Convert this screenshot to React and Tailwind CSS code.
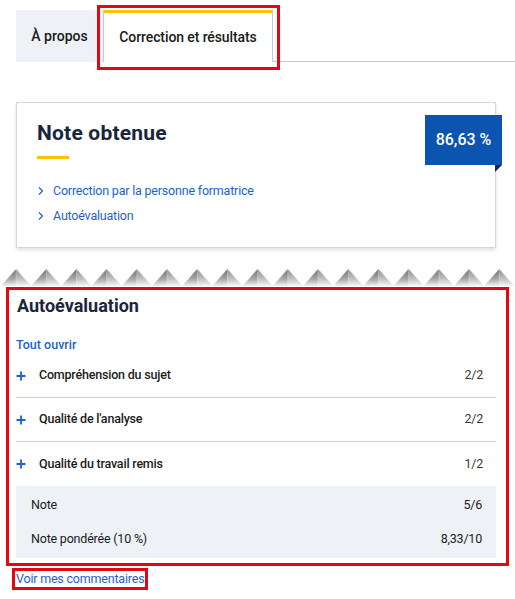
import React from "react";

const font = { fontFamily: "Roboto, 'Noto Sans', sans-serif" };

// torn-paper edge made of shaded pyramids
function Zigzag() {
  return (
    <svg width="515" height="17" className="block">
      <defs>
        <linearGradient id="fadeL" x1="0" y1="0" x2="0" y2="1">
          <stop offset="0" stopColor="#6e6e6e" />
          <stop offset="0.6" stopColor="#a9a9a9" />
          <stop offset="1" stopColor="#f2f2f2" />
        </linearGradient>
        <linearGradient id="fadeR" x1="0" y1="0" x2="0" y2="1">
          <stop offset="0" stopColor="#8c8c8c" />
          <stop offset="0.6" stopColor="#c4c4c4" />
          <stop offset="1" stopColor="#f6f6f6" />
        </linearGradient>
        <pattern id="teeth" x="1" y="0" width="30.2" height="17" patternUnits="userSpaceOnUse">
          <polygon points="0,17 15,0 15,17" fill="url(#fadeL)" />
          <polygon points="15,0 30.2,17 15,17" fill="url(#fadeR)" />
        </pattern>
      </defs>
      <rect x="0" y="0" width="515" height="17" fill="url(#teeth)" />
    </svg>
  );
}

function Chevron() {
  return (
    <svg width="8" height="10" viewBox="0 0 8 10" className="shrink-0">
      <path d="M2 1.5 L5.5 5 L2 8.5" fill="none" stroke="#1f5fcc" strokeWidth="1.2" />
    </svg>
  );
}

function Plus() {
  return (
    <svg width="10" height="10" viewBox="0 0 10 10" className="shrink-0">
      <path d="M5 0.5 V9.5 M0.5 5 H9.5" stroke="#1f5fcc" strokeWidth="1.8" />
    </svg>
  );
}

const criteres = [
  { label: "Compréhension du sujet", score: "2/2" },
  { label: "Qualité de l'analyse", score: "2/2" },
  { label: "Qualité du travail remis", score: "1/2" },
];

export default function App() {
  return (
    <div className="w-[515px] h-[599px] bg-white overflow-hidden text-[#1b1b1b]" style={font}>
      {/* Tabs */}
      <div className="flex pt-[10px] pl-[16px]">
        <div className="w-[87px] h-[52px] bg-[#eef1f5] flex items-center justify-center text-[14px] font-medium text-[#1a1a1a]">
          À propos
        </div>
        <div className="relative w-[170px] h-[52px] border-t-[3px] border-t-[#fcc200] border-x border-x-[#c5cbd4] flex items-center justify-center text-[14px] font-medium text-[#1a1a1a] tracking-[-0.1px]">
          Correction et résultats
          <div className="absolute left-[-7px] right-[-8px] top-[-8px] bottom-[-8px] border-[3px] border-[#e30613]"></div>
        </div>
        <div className="flex-1 h-[52px] border-b border-[#c5cbd4]"></div>
      </div>

      {/* Note card */}
      <div className="relative ml-[16px] w-[480px] mt-[40px] h-[146px] border border-[#d3d8df] shadow-[0_2px_4px_rgba(0,0,0,0.12)] pl-[20px] pt-[16px]">
        <h2 className="text-[21px] leading-[28px] font-bold text-[#18263d] tracking-[0.2px]">Note obtenue</h2>
        <div className="mt-[9px] w-[32px] h-[3px] bg-[#fcc200]"></div>
        <div className="mt-[24px] flex flex-col gap-[9px] text-[12.5px] tracking-[-0.2px] text-[#1f5fcc]">
          <div className="flex items-center gap-[8px] h-[16px]">
            <Chevron />
            <span>Correction par la personne formatrice</span>
          </div>
          <div className="flex items-center gap-[8px] h-[16px]">
            <Chevron />
            <span>Autoévaluation</span>
          </div>
        </div>
        <div className="absolute top-[12px] right-[-7px]">
          <div className="w-[77px] h-[50px] bg-[#0b55b1] text-white flex items-center justify-center text-[16px] font-medium">
            86,63 %
          </div>
          <svg width="7" height="7" className="block ml-auto">
            <polygon points="0,0 7,0 0,7" fill="#13294b" />
          </svg>
        </div>
      </div>

      {/* Torn edge */}
      <div className="mt-[21px]">
        <Zigzag />
      </div>

      {/* Autoévaluation */}
      <div className="relative pl-[16px] pt-[7px] mt-[1px]">
        <div className="absolute left-[6px] right-[6px] top-[0px] h-[279px] border-[3px] border-[#e30613]"></div>
        <div className="w-[480px]">
          <h3 className="text-[18px] leading-[24px] font-bold text-[#18263d] pl-[1px]">Autoévaluation</h3>
          <div className="mt-[18px] text-[12.5px] leading-[18px] font-medium text-[#1f5fcc]">Tout ouvrir</div>
          <div>
            {criteres.map((c, i) => (
              <div
                key={c.label}
                className={`flex items-center h-[44px] pr-[13px] text-[12.5px] tracking-[-0.2px] ${i < criteres.length - 1 ? "border-b border-[#c9d0d9]" : ""}`}
              >
                <Plus />
                <span className="ml-[13px] flex-1 font-medium">{c.label}</span>
                <span className="text-[#3a3a3a]">{c.score}</span>
              </div>
            ))}
          </div>
          <div className="bg-[#eef1f5] h-[72px] pl-[15px] pr-[14px] flex flex-col justify-center gap-[15px] text-[12.5px] tracking-[-0.2px]">
            <div className="flex justify-between">
              <span>Note</span>
              <span>5/6</span>
            </div>
            <div className="flex justify-between">
              <span>Note pondérée (10 %)</span>
              <span>8,33/10</span>
            </div>
          </div>
          <div className="relative inline-block mt-[12px] text-[12.5px] leading-[18px] tracking-[-0.2px] text-[#1f5fcc]">
            Voir mes commentaires
            <div className="absolute left-[-4px] right-[-4px] top-[-2px] bottom-[-2px] border-[3px] border-[#e30613]"></div>
          </div>
        </div>
      </div>
    </div>
  );
}
